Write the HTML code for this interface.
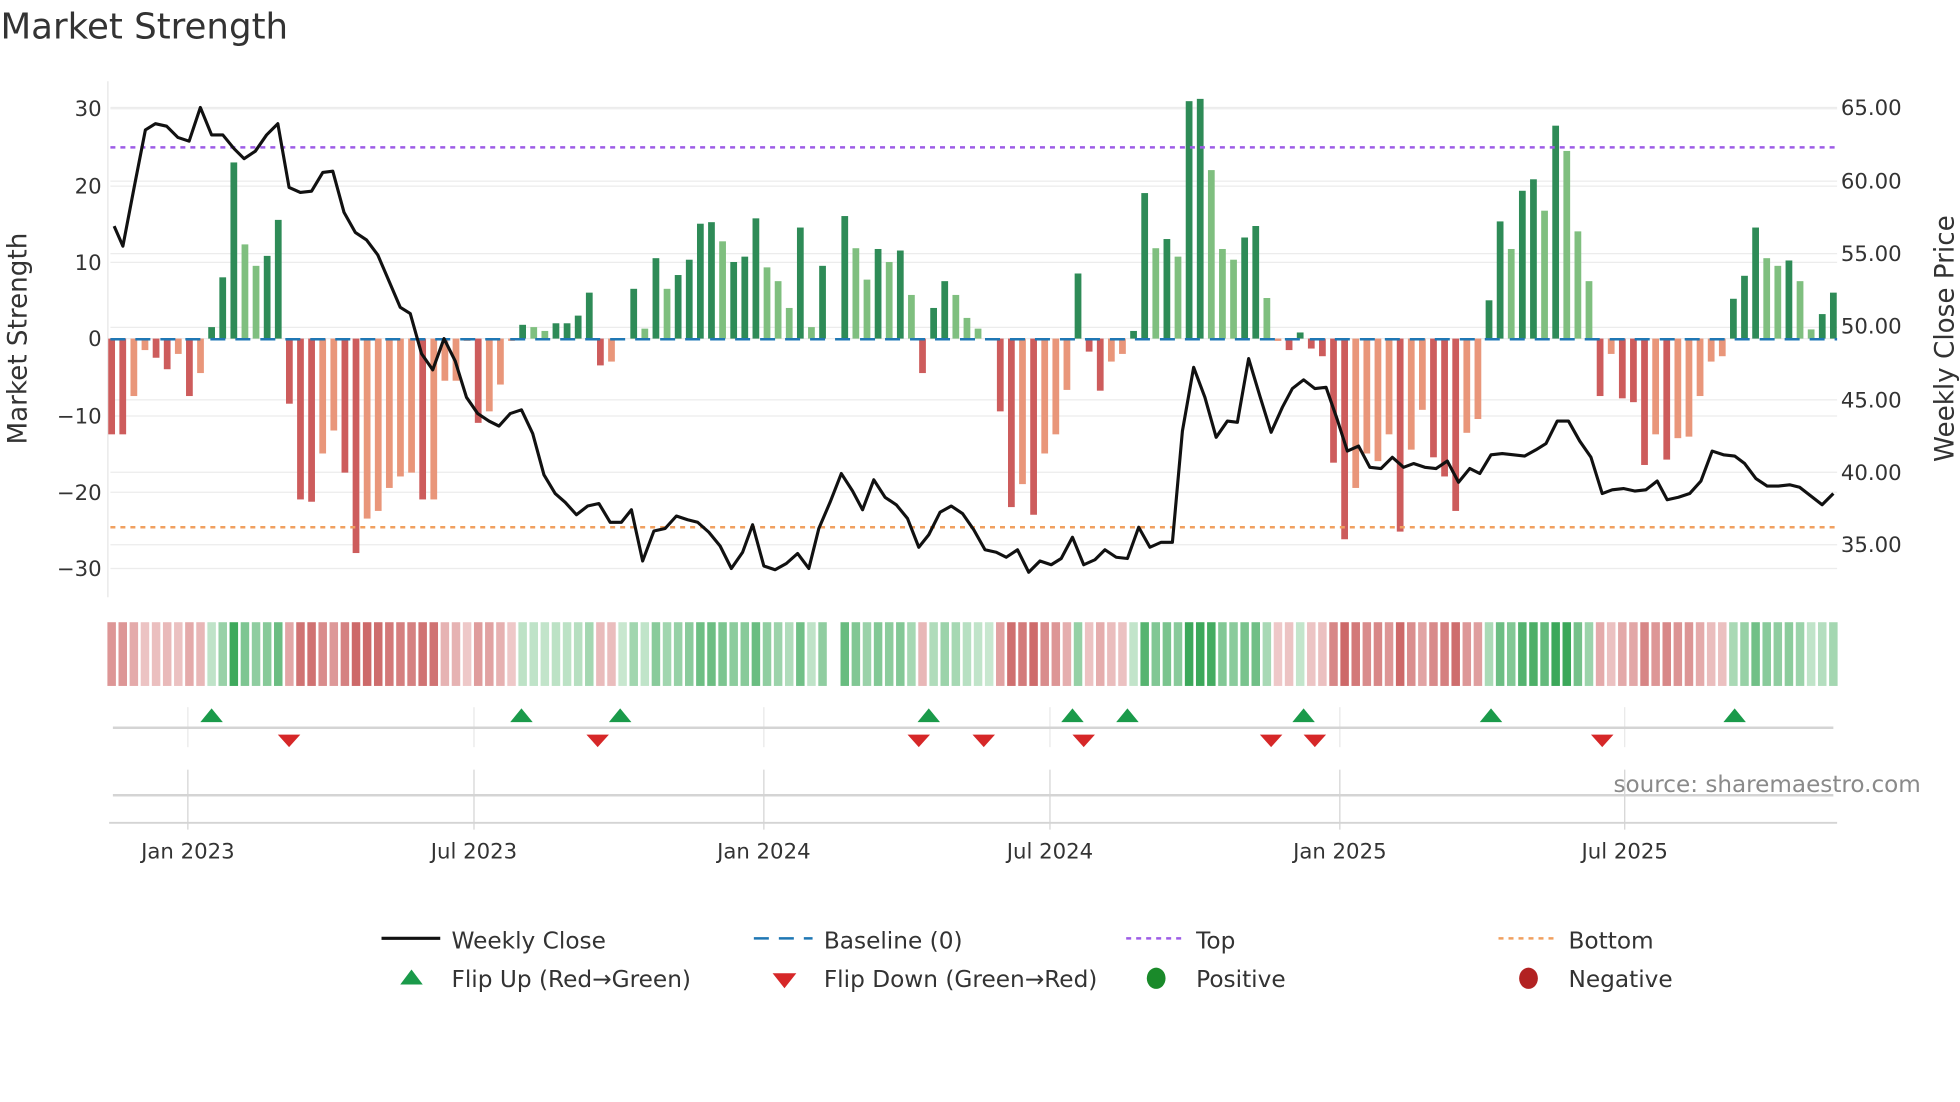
<!DOCTYPE html>
<html><head><meta charset="utf-8">
<style>
html,body{margin:0;padding:0;background:#fff;width:1960px;height:1102px;overflow:hidden}
svg{display:block}
text{font-family:"DejaVu Sans","Liberation Sans",sans-serif;fill:#333}
</style></head><body>
<svg id="s" width="1960" height="1102" viewBox="0 0 1568 882" xmlns="http://www.w3.org/2000/svg">
<text x="0" y="31" font-size="28.5" fill="#333">Market Strength</text>
<g id="grid" stroke="#ececec" stroke-width="1"></g>
<line x1="86" y1="65" x2="86" y2="478" stroke="#e6e6e6"/>
<g id="bars"></g>
<line x1="88" y1="271.5" x2="1470" y2="271.5" stroke="#1f77b4" stroke-width="2" stroke-dasharray="12,8"/>
<line x1="88" y1="118" x2="1470" y2="118" stroke="#9d5ce6" stroke-width="2" stroke-dasharray="4,4"/>
<line x1="88" y1="422" x2="1470" y2="422" stroke="#f0a060" stroke-width="2" stroke-dasharray="4,4"/>
<polyline id="price" fill="none" stroke="#111" stroke-width="2.5" stroke-linejoin="round"/>
<g id="strip"></g>
<g id="lower" stroke="#e8e8e8"></g>
<line x1="90" y1="582.5" x2="1467" y2="582.5" stroke="#d4d4d4" stroke-width="2"/>
<line x1="90" y1="636.5" x2="1467" y2="636.5" stroke="#d4d4d4" stroke-width="2"/>
<line x1="87" y1="658.5" x2="1470" y2="658.5" stroke="#d4d4d4" stroke-width="1.5"/>
<g id="marks"></g>
<g font-size="17" text-anchor="end">
<text x="81" y="93">30</text><text x="81" y="155">20</text><text x="81" y="216">10</text><text x="81" y="277">0</text>
<text x="81" y="339">−10</text><text x="81" y="400">−20</text><text x="81" y="461">−30</text>
</g>
<g font-size="17">
<text x="1473" y="92">65.00</text><text x="1473" y="151">60.00</text><text x="1473" y="209">55.00</text><text x="1473" y="267">50.00</text>
<text x="1473" y="326">45.00</text><text x="1473" y="384">40.00</text><text x="1473" y="442">35.00</text>
</g>
<text transform="translate(21,271) rotate(-90)" font-size="21" text-anchor="middle">Market Strength</text>
<text transform="translate(1563,271) rotate(-90)" font-size="21" text-anchor="middle">Weekly Close Price</text>
<text x="1537" y="634" font-size="18.5" text-anchor="end" style="fill:#8a8a8a">source: sharemaestro.com</text>
<g font-size="17" text-anchor="middle">
<text x="150" y="687">Jan 2023</text><text x="379" y="687">Jul 2023</text><text x="611" y="687">Jan 2024</text>
<text x="840" y="687">Jul 2024</text><text x="1072" y="687">Jan 2025</text><text x="1300" y="687">Jul 2025</text>
</g>
<g font-size="18.6">
<line x1="305" y1="751" x2="352" y2="751" stroke="#111" stroke-width="2.5"/><text x="361" y="759">Weekly Close</text>
<line x1="603" y1="751" x2="650" y2="751" stroke="#1f77b4" stroke-width="2" stroke-dasharray="12,8"/><text x="659" y="759">Baseline (0)</text>
<line x1="901" y1="751" x2="946" y2="751" stroke="#9d5ce6" stroke-width="2" stroke-dasharray="4,4"/><text x="957" y="759">Top</text>
<line x1="1199" y1="751" x2="1244" y2="751" stroke="#f0a060" stroke-width="2" stroke-dasharray="4,4"/><text x="1255" y="759">Bottom</text>
<polygon points="320,788 329,776 338,788" fill="#1a9a4a"/><text x="361" y="790">Flip Up (Red→Green)</text>
<polygon points="618,779 637,779 627.5,791" fill="#d62728"/><text x="659" y="790">Flip Down (Green→Red)</text>
<ellipse cx="925" cy="783" rx="7.5" ry="8.5" fill="#1a8a2a"/><text x="957" y="790">Positive</text>
<ellipse cx="1223" cy="783" rx="7.5" ry="8.5" fill="#b22222"/><text x="1255" y="790">Negative</text>
</g>
</svg>
<script>
var NS="http://www.w3.org/2000/svg";
function el(p,t,a){var e=document.createElementNS(NS,t);for(var k in a)e.setAttribute(k,a[k]);p.appendChild(e);return e}
var g=document.getElementById('grid');
[87,149,210,271,333,394,455,86,145,203,262,320,378,436].forEach(function(y){el(g,'line',{x1:88,x2:1470,y1:y,y2:y})});
var B=[[-12.5,1],[-12.5,1],[-7.5,0],[-1.5,0],[-2.5,1],[-4,1],[-2,0],[-7.5,1],[-4.5,0],[1.5,1],[8,1],[23,1],[12.3,0],[9.5,0],[10.8,1],[15.5,1],
[-8.5,1],[-21,1],[-21.3,1],[-15,0],[-12,0],[-17.5,1],[-28,1],[-23.5,0],[-22.5,0],[-19.5,0],[-18,0],[-17.5,0],[-21,1],[-21,0],[-5.5,0],[-5.5,0],[-0.3,0],[-11,1],[-9.5,0],[-6,0],[-0.3,0],
[1.8,1],[1.5,0],[1,0],[2,1],[2,1],[3,1],[6,1],[-3.5,1],[-3,0],[0,0],[6.5,1],[1.3,0],[10.5,1],[6.5,0],[8.3,1],[10.3,1],[15,1],[15.2,1],[12.7,0],[10,1],[10.7,1],[15.7,1],[9.3,0],[7.5,0],[4,0],[14.5,1],[1.5,0],[9.5,1],[0,0],
[16,1],[11.8,0],[7.7,0],[11.7,1],[10,0],[11.5,1],[5.7,0],[-4.5,1],[4,1],[7.5,1],[5.7,0],[2.7,0],[1.3,0],[0,0],[-9.5,1],[-22,1],[-19,0],[-23,1],[-15,0],[-12.5,0],[-6.7,0],[8.5,1],[-1.7,1],[-6.8,1],[-3,0],[-2,0],[1,1],[19,1],[11.8,0],[13,1],[10.7,0],[31,1],[31.3,1],[22,0],[11.7,0],[10.3,0],[13.2,1],[14.7,1],[5.3,0],[-0.3,0],[-1.5,1],[0.8,1],[-1.3,1],[-2.3,1],
[-16.2,1],[-26.2,1],[-19.5,0],[-15,0],[-16,0],[-12.5,0],[-25.2,1],[-14.5,0],[-9.3,0],[-15.5,1],[-18,1],[-22.5,1],[-12.3,0],[-10.5,0],[5,1],[15.3,1],[11.7,0],[19.3,1],[20.8,1],[16.7,0],[27.8,1],[24.5,0],[14,0],[7.5,0],
[-7.5,1],[-2,0],[-7.8,1],[-8.3,1],[-16.5,1],[-12.5,0],[-15.8,1],[-13,0],[-12.8,0],[-7.5,0],[-3,0],[-2.3,0],[5.2,1],[8.2,1],[14.5,1],[10.5,0],[9.5,0],[10.2,1],[7.5,0],[1.2,0],[3.2,1],[6,1]];
var bg=document.getElementById('bars'),sg=document.getElementById('strip');
var n=B.length,step=(1467-89)/(n-1);
B.forEach(function(b,i){
 var x=89+step*i,v=b[0],y0=271,h=Math.abs(v)*6.13;
 var c=v>=0?(b[1]?'#2e8b57':'#7fbf7f'):(b[1]?'#cd5c5c':'#e9967a');
 if(h>0.5)el(bg,'rect',{x:x-2.7,y:v>=0?y0-h:y0,width:5.4,height:h,fill:c});
 if(x>658&&x<668)return;
 var m=Math.min(1,Math.abs(v)/26+0.1),col;
 if(v>=0){col='rgb('+Math.round(215-(215-60)*m)+','+Math.round(238-(238-168)*m)+','+Math.round(220-(220-90)*m)+')';}
 else{col='rgb('+Math.round(242-(242-205)*m)+','+Math.round(212-(212-105)*m)+','+Math.round(212-(212-105)*m)+')';}
 el(sg,'rect',{x:x-3.4,y:498,width:6.8,height:51,fill:col});
});
var P=[[91,181],[98,197],[107,150],[116,104],[124,99],[133,101],[142,110],[151,113],[160,86],[169,108],[178,108],[187,119],[195,127],[204,121],[213,108],[222,99],[231,150],[240,154],[249,153],[258,138],[266,137],[275,170],[284,186],[293,192],[302,204],[311,225],[320,246],[328,251],[337,283],[346,296],[355,271],[364,289],[373,318],[382,331],[391,337],[399,341],[408,331],[417,328],[426,347],[435,380],[444,395],[452,402],[461,412],[470,405],[479,403],[488,418],[497,418],[505,408],[514,449],[523,425],[532,423],[541,413],[550,416],[558,418],[567,426],[576,437],[585,455],[594,442],[602,420],[611,453],[620,456],[629,451],[638,443],[647,455],[655,423],[664,402],[673,379],[682,393],[690,408],[699,384],[708,398],[717,404],[726,415],[735,438],[743,428],[752,410],[761,405],[770,411],[779,424],[788,440],[797,442],[805,446],[814,440],[823,458],[832,449],[841,452],[849,447],[858,430],[867,452],[876,448],[884,440],[893,446],[902,447],[911,422],[920,438],[929,434],[938,434],[946,345],[955,294],[964,318],[973,350],[982,337],[990,338],[999,287],[1008,317],[1017,346],[1026,326],[1034,311],[1043,304],[1052,311],[1061,310],[1070,336],[1078,361],[1087,357],[1096,374],[1105,375],[1114,366],[1123,374],[1131,371],[1140,374],[1149,375],[1158,369],[1167,386],[1176,375],[1184,379],[1193,364],[1202,363],[1211,364],[1220,365],[1229,360],[1237,355],[1246,337],[1255,337],[1264,353],[1273,366],[1282,395],[1290,392],[1299,391],[1308,393],[1317,392],[1326,385],[1334,400],[1343,398],[1352,395],[1361,385],[1370,361],[1379,364],[1388,365],[1396,371],[1405,383],[1414,389],[1423,389],[1432,388],[1440,390],[1449,397],[1458,404],[1467,395]];
document.getElementById('price').setAttribute('points',P.map(function(p){return p.join(',')}).join(' '));
var lg=document.getElementById('lower');
[150,379,611,840,1072,1300].forEach(function(x){el(lg,'line',{x1:x,x2:x,y1:566,y2:598});el(lg,'line',{x1:x,x2:x,y1:616,y2:664,stroke:'#d4d4d4'})});
var mg=document.getElementById('marks');
[169,417,496,743,858,902,1043,1193,1388].forEach(function(x){el(mg,'polygon',{points:(x-9)+',578 '+x+',567 '+(x+9)+',578',fill:'#1a9a4a'})});
[231,478,735,787,867,1017,1052,1282].forEach(function(x){el(mg,'polygon',{points:(x-9)+',588 '+(x+9)+',588 '+x+',598',fill:'#d62728'})});
</script>
</body></html>
